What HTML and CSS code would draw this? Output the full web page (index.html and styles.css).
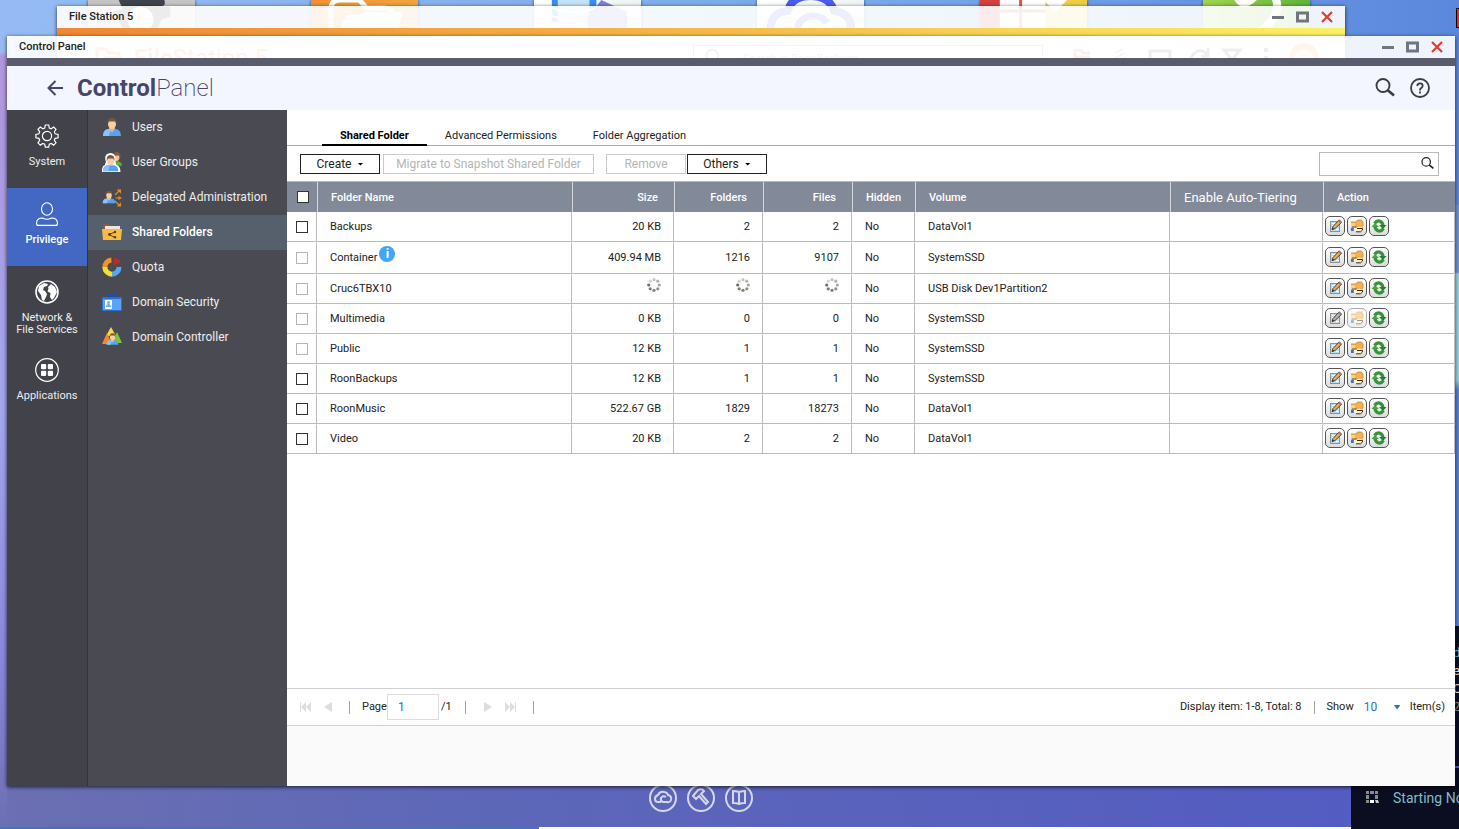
FILE: index.html
```html
<!DOCTYPE html>
<html lang="en">
<head>
  <meta charset="UTF-8" />
  <meta name="viewport" content="width=device-width, initial-scale=1.0" />
  <title>Control Panel</title>
  <link rel="stylesheet" href="styles.css">
</head>
<body>
  <svg class="sprite" aria-hidden="true">
    <symbol id="i-min" viewBox="0 0 12 12"><path d="M0 5h12v3H0z" fill="#70757f"/></symbol>
    <symbol id="i-max" viewBox="0 0 13 12"><path d="M1.5 2h10v8h-10z" fill="none" stroke="#70757f" stroke-width="3"/></symbol>
    <symbol id="i-close" viewBox="0 0 12 12"><path d="M1 1l10 10M11 1L1 11" stroke="#e03c31" stroke-width="2.200"/></symbol>
    <symbol id="i-search" viewBox="0 0 20 20"><circle cx="8" cy="7.500" r="6.500" fill="none" stroke="currentColor" stroke-width="1.900"/><path d="M12.500 12l6.500 5.500" stroke="currentColor" stroke-width="2.600"/></symbol>
    <symbol id="i-edit" viewBox="0 0 20 20">
      <rect x="5.500" y="5.500" width="9" height="10" fill="#b5e0f5" stroke="#8d9299"/>
      <path d="M7 7.500h5M7 9.500h3M11 13.500h3" stroke="#fff"/>
      <path d="M7 13.500l1-3 6-6.500 2.500 2.500-6.500 6z" fill="#f3ab45" stroke="#333" stroke-width=".9"/>
      <path d="M13 5l1.500-1.700 2.700 2.600-1.500 1.600z" fill="#9a7d78"/>
      <path d="M7 13.700l.8-2 1.400 1.300z" fill="#222"/>
    </symbol>
    <symbol id="i-perm" viewBox="0 0 20 20">
      <path d="M4 6h5l1.500-2h4L16 6v7H4z" fill="#f7b04d"/>
      <path d="M4 7h4v4H4z" fill="#ffd27a"/>
      <path d="M4 6h5l1.500-2h4L16 6v4" fill="none" stroke="#c08a3c" stroke-width=".8"/>
      <path d="M6.500 11.500H10l2-1 3.500 1v2.500l-2 1.800H9L6.500 14z" fill="#fff1c4"/>
      <path d="M10 12.500h5.500v1.500l-2 1.800H9" fill="none" stroke="#3c2d22" stroke-width="1"/>
      <path d="M5 11h4.500" stroke="#3c2d22" stroke-width=".8"/>
      <path d="M4 12h2.800v3H4z" fill="#3374d8"/>
    </symbol>
    <symbol id="i-refresh" viewBox="0 0 20 20">
      <g fill="none" stroke="#35933a" stroke-width="3.200"><path d="M5.500 7.500Q8 4 11 5.200q3 1.300 3 4.800"/><path d="M14.500 12.500Q12 16 9 14.800 6 13.500 6 10"/></g>
      <path d="M10 9h7.500L14 13z" fill="#268030"/><path d="M2.500 11H10L6 7z" fill="#49a344"/>
    </symbol>
    <symbol id="i-spin" viewBox="0 0 14 14">
      <g fill="#6c6c60">
        <circle cx="7" cy="1.700" r="1.600" opacity=".4"/><circle cx="10.800" cy="3.200" r="1.600" opacity=".5"/><circle cx="12.300" cy="7" r="1.600" opacity=".6"/><circle cx="10.800" cy="10.800" r="1.600" opacity=".75"/>
        <circle cx="7" cy="12.300" r="1.600" opacity=".85"/><circle cx="3.200" cy="10.800" r="1.600" opacity=".9"/><circle cx="1.700" cy="7" r="1.600"/><circle cx="3.200" cy="3.200" r="1.600" opacity=".3"/>
      </g>
    </symbol>
    <symbol id="i-person" viewBox="0 0 20 20">
      <path d="M1 19q0-6 5-7h8q5 1 5 7z" fill="#55a3f2"/><path d="M1 19q0-6 5-7h3l-2 7z" fill="#8ac2fa"/>
      <path d="M7 11l3 4 3-4z" fill="#fff"/><path d="M8 10h4v3l-2 2-2-2z" fill="#e5b185"/>
      <ellipse cx="10" cy="7" rx="4" ry="5" fill="#f7cfa3"/><path d="M5.500 7q-.5-6 4.500-6t4.500 6l-1.500-2.500q-4 0-6 0z" fill="#7c543a"/>
    </symbol>
  </svg>

  <div class="desktop">
    <div class="app-tiles">
      <div class="tile tile-grey"><svg viewBox="0 0 108 50"><path d="M31 0h46q2 5-2 6l8 1v10l-9 3-3 8 6 10-20 12H46L30 38l5-9q-4-8-4-9l-7-8 11-3z" fill="#3f434b"/><circle cx="53" cy="20" r="13" fill="#f0f0f0"/></svg></div>
      <div class="tile tile-orange"><svg viewBox="0 0 108 50"><path d="M20 40V10q0-10 9-10h20l7 8h18q8 0 8 8v12" fill="none" stroke="#fff" stroke-width="5"/><path d="M36 15h12l5-3h39l-8 38H20z" fill="#fff"/></svg></div>
      <div class="tile"><svg viewBox="0 0 108 50"><path d="M18 0h45v22H18z" fill="#3b8df5"/><path d="M24 0h32v22H24z" fill="#c5e2fb"/><path d="M18 8q23 8 45 0M18 16q23 8 45 0" fill="none" stroke="#fff" stroke-width="2"/><path d="M68 0l26 12v16q-20 14-40 0V18z" fill="#7c80dc"/><path d="M15 50V26q0-4 5-4h30q5 0 5 6h14v22z" fill="#dbe2ef"/></svg></div>
      <div class="tile"><svg viewBox="0 0 108 50"><path d="M14 44V26q2-14 17-15Q35-4 54-4t24 15q15 2 17 15v18" fill="none" stroke="#4b5cf0" stroke-width="8"/><path d="M40 40q-2-22 16-24 10 0 15 7" fill="none" stroke="#4b5cf0" stroke-width="7"/></svg></div>
      <div class="tile tile-split"><svg viewBox="0 0 108 50"><path d="M20-12h46v60H20z" fill="#fff"/><path d="M64 0h24L76 12z" fill="#fff"/><path d="M41-8v55M18 11h48" stroke="#e2563f" stroke-width="3"/></svg></div>
      <div class="tile tile-green"><svg viewBox="0 0 108 50"><path d="M35-2q4 7 10 4t8-7h19q10 20-15 37" fill="none" stroke="#fff" stroke-width="8"/></svg></div>
    </div>

    <section class="window file-station">
      <div class="titlebar">
        <span>File Station 5</span>
        <div class="window-controls">
          <button aria-label="Minimize"><svg width="12" height="12"><use href="#i-min"/></svg></button>
          <button aria-label="Maximize"><svg width="13" height="12"><use href="#i-max"/></svg></button>
          <button aria-label="Close"><svg width="12" height="12"><use href="#i-close"/></svg></button>
        </div>
      </div>
      <div class="fs-stripe"></div>
      <div class="fs-header">
        <svg width="28" height="24" viewBox="0 0 28 24" fill="none" stroke="#f08a30" stroke-width="3"><path d="M2 20V3h9l3 4h10v4M6 22l4-10h17"/></svg>
        <div class="fs-logo"><b>File</b>Station 5</div>
        <div class="fs-search"><svg width="18" height="18"><use href="#i-search"/></svg><span>Search in RoonBackups</span></div>
        <div class="fs-tools">
          <svg width="230" height="26" viewBox="0 0 230 26" fill="none" stroke="#555" stroke-width="3"><path d="M2 16V5h6l2 3h7M1 12h16" stroke="#e06b30"/><path d="M42 8l8-4M42 13l10-5M43 18l10-6" stroke-width="1"/><path d="M77 20V6h20v14M135 11q-5-8-12-4t-5 12M135 3v8h-7M151 5h16l-8 10z"/><path d="M193 3v4M193 11v4" stroke-width="4"/></svg>
          <i class="fs-badge"></i>
        </div>
      </div>
    </section>

    <nav class="dock">
      <a href="#" aria-label="Cloud"><svg viewBox="0 0 28 28"><circle cx="14" cy="14" r="13"/><path d="M12 18H9q-3 0-3-3t3-4q2-4 6-3 3 0 4 3 4 1 3 5-1 3-4 2h-4q-3-1-2-4 2-3 5-1"/></svg></a>
      <a href="#" aria-label="Utilities"><svg viewBox="0 0 28 28"><circle cx="14" cy="14" r="13"/><path d="M6 12l5-6q4-2 6 1l-3 3 7 8-2 2-7-8-3 3z"/></svg></a>
      <a href="#" aria-label="Help Center"><svg viewBox="0 0 28 28"><circle cx="14" cy="14" r="13"/><path d="M14 8q-3-1-6-1v12q4 0 6 1 2-1 6-1V7q-3 0-6 1zv12"/></svg></a>
    </nav>
    <div class="progress"></div>

    <aside class="notice">
      <div class="notice-text"><p class="teal">d</p><p>e</p><p>C</p><p class="dim">2</p></div>
      <div class="notice-foot">
        <svg width="13" height="13" viewBox="0 0 13 13" fill="#8b8b8b"><path d="M0 0h3v3H0zM4 0h4v3H4zM9 0h3v3H9zM0 4h3v4H0zM9 4h3v4H9zM0 9h3v3H0z"/><path d="M4 9h4v3H4z" fill="#fff"/><path d="M9 9h3l1 3H10z" fill="#ccc"/></svg>
        <span>Starting Now</span>
      </div>
    </aside>
    <div class="edge-mark"></div>

    <main class="window control-panel">
      <div class="titlebar">
        <span>Control Panel</span>
        <div class="window-controls">
          <button aria-label="Minimize"><svg width="12" height="12"><use href="#i-min"/></svg></button>
          <button aria-label="Maximize"><svg width="13" height="12"><use href="#i-max"/></svg></button>
          <button aria-label="Close"><svg width="12" height="12"><use href="#i-close"/></svg></button>
        </div>
      </div>
      <div class="cp-stripe"></div>
      <header class="cp-header">
        <button class="back" aria-label="Back"><svg width="16" height="16" viewBox="0 0 16 16" fill="none" stroke="#47456b" stroke-width="2"><path d="M16 8H2M8.500 1L1.500 8l7 7"/></svg></button>
        <h1><b>Control</b>Panel</h1>
        <div class="cp-tools">
          <button aria-label="Search"><svg width="20" height="20"><use href="#i-search"/></svg></button>
          <button aria-label="Help"><svg width="20" height="20" viewBox="0 0 20 20" fill="none" stroke="currentColor" stroke-width="1.800"><circle cx="10" cy="10" r="9"/><path d="M7.300 8q0-2.700 2.700-2.700T12.700 7.800q0 1.200-1.400 2.200T10 12v.5M10 13.600v1.900"/></svg></button>
        </div>
      </header>

      <div class="cp-body">
        <nav class="rail">
          <a href="#"><svg width="24" height="24" viewBox="0 0 24 24" fill="none" stroke="#fff" stroke-width="1.200"><circle cx="12" cy="12" r="4.600"/><path d="M10.300 1h3.400l.6 3 1.900.8 2.500-1.700 2.300 2.300-1.700 2.500.8 1.900 3 .6v3.400l-3 .6-.8 1.900 1.700 2.500-2.300 2.300-2.500-1.700-1.900.8-.6 3h-3.400l-.6-3-1.900-.8-2.500 1.700L3 18.800l1.700-2.500-.8-1.900-3-.6v-3.400l3-.6.8-1.900L3 5.400l2.300-2.300 2.500 1.700 1.900-.8z"/></svg><span>System</span></a>
          <a href="#" class="active"><svg width="24" height="24" viewBox="0 0 24 24" fill="none" stroke="#fff" stroke-width="1.100"><ellipse cx="12" cy="7" rx="5.500" ry="6.300"/><path d="M3.500 23.400h17q2 0 2-2 0-5.400-6-5.400-4.500 2.500-9 0-6 0-6 5.400 0 2 2 2z"/></svg><span>Privilege</span></a>
          <a href="#"><svg width="24" height="24" viewBox="0 0 24 24"><circle cx="12" cy="12" r="11" fill="none" stroke="#fff" stroke-width="1.600"/><path d="M4 6l5-3 4 1-1 2-3 1-1 3 2 1 2 3-1 3-2 4-2-1-1-5-3-4zM13 7l3-3 4 3 2 5-3 6-2 2-2-3 .5-4-3-1.500 1-3z" fill="#fff"/></svg><span>Network &amp;<br>File Services</span></a>
          <a href="#"><svg width="24" height="24" viewBox="0 0 24 24"><circle cx="12" cy="12" r="11.300" fill="none" stroke="#fff" stroke-width="1.200"/><g fill="#fff"><rect x="6" y="6" width="5.200" height="5.200" rx="1"/><rect x="12.800" y="6" width="5.200" height="5.200" rx="1"/><rect x="6" y="12.800" width="5.200" height="5.200" rx="1"/><rect x="12.800" y="12.800" width="5.200" height="5.200" rx="1"/></g></svg><span>Applications</span></a>
        </nav>

        <nav class="submenu">
          <a href="#"><svg width="20" height="20"><use href="#i-person"/></svg>Users</a>
          <a href="#"><svg width="20" height="20" viewBox="0 0 20 20"><path d="M10 13q1-4 4-4 6 0 6 5z" fill="#5fae2f"/><ellipse cx="14.500" cy="5" rx="3" ry="4" fill="#f2c398"/><path d="M11 4q0-4 4-4t3.500 6l-2-2.500z" fill="#8a5a3c"/><path d="M0 20q-.5-6 3-7 0-2 1-3-3-8 4.500-9 6 0 5 9l1 3q4 1 4 7z" fill="#fff"/><g transform="translate(0 3) scale(.86)"><path d="M1 19q0-6 5-7h8q5 1 5 7z" fill="#55a3f2"/><path d="M1 19q0-6 5-7h3l-2 7z" fill="#8ac2fa"/><ellipse cx="10" cy="7" rx="4" ry="5" fill="#f7cfa3"/><path d="M5.500 7Q5 0 10 0t4.500 7L13 4H7z" fill="#7c543a"/></g></svg>User Groups</a>
          <a href="#"><svg width="20" height="20" viewBox="0 0 20 20"><svg x="0" y="3" width="14" height="14" viewBox="0 0 20 20"><use href="#i-person"/></svg><g stroke="#e8892b" stroke-width="1.100" fill="#e8892b"><path d="M13 8l4-4M13.500 11h4M13 14l4 4" fill="none"/><path d="M16 3h2.500v2.500zM17 10l2 1-2 1zM18.500 16.500V19H16z"/></g></svg>Delegated Administration</a>
          <a href="#" class="active"><svg width="20" height="20" viewBox="0 0 20 20"><path d="M1 2h6l2 2h9v5H1z" fill="#8a5a43"/><path d="M3 4h15v4H3z" fill="#f3e6d6"/><path d="M0 7h20l-1 11H1z" fill="#f5bd41"/><path d="M13 10l-6 2.500 6 3" stroke="#5d3b1c" stroke-width="1" fill="none"/><g fill="#5d3b1c"><circle cx="13" cy="10" r="1.200"/><circle cx="7.500" cy="12.500" r="1.400"/><circle cx="13" cy="15.300" r="1.200"/></g></svg>Shared Folders</a>
          <a href="#"><svg width="20" height="20" viewBox="0 0 20 20" fill="none" stroke-width="5"><path d="M2.900 10.500a7 7 0 0 1 6.500-7.500" stroke="#f39326"/><path d="M2.900 10a7 7 0 0 0 7.100 7.200" stroke="#fbdc35"/><path d="M10 17.200A7 7 0 0 0 17 10" stroke="#55a8ec"/><path d="M12 8V1q5 0 7 4.500z" fill="#b52f2a"/></svg>Quota</a>
          <a href="#"><svg width="20" height="20" viewBox="0 0 20 20"><path d="M5 0l5 3 5-3-1 6H6z" fill="#1f4fa8"/><path d="M0 5h20v14H0z" fill="#2b6fd0"/><path d="M1 7h18v11H1z" fill="#5aa4f5"/><path d="M3 8h7v9H3z" fill="#fff"/><path d="M4 15q0-3 2.500-3T9 15z" fill="#6aaef5"/><circle cx="6.500" cy="10.500" r="1.500" fill="#6aaef5"/></svg>Domain Security</a>
          <a href="#"><svg width="20" height="20" viewBox="0 0 20 20"><path d="M9 0l5 9H4z" fill="#f8df35"/><path d="M5 6l5 11H0z" fill="#f08a2c"/><path d="M15 5l5 11H10z" fill="#7bc832"/><svg x="4" y="5" width="13" height="14" viewBox="0 0 20 20"><use href="#i-person"/></svg></svg>Domain Controller</a>
        </nav>

        <section class="content">
          <div class="tabs" role="tablist">
            <button role="tab" aria-selected="true" class="active">Shared Folder</button>
            <button role="tab" aria-selected="false">Advanced Permissions</button>
            <button role="tab" aria-selected="false">Folder Aggregation</button>
          </div>
          <div class="toolbar">
            <button class="menu">Create</button>
            <button class="wide" disabled>Migrate to Snapshot Shared Folder</button>
            <button class="apart" disabled>Remove</button>
            <button class="menu others">Others</button>
            <div class="search">
              <input type="text" aria-label="Search folders">
              <button aria-label="Search"><svg width="13" height="13"><use href="#i-search"/></svg></button>
            </div>
          </div>

          <table>
            <colgroup><col class="c-check"><col><col class="c-size"><col class="c-num"><col class="c-num"><col class="c-hidden"><col><col class="c-tier"><col class="c-action"></colgroup>
            <thead>
              <tr><th class="check"><input type="checkbox" aria-label="Select all"></th><th>Folder Name</th><th class="num">Size</th><th class="num">Folders</th><th class="num">Files</th><th>Hidden</th><th>Volume</th><th class="tier">Enable Auto-Tiering</th><th>Action</th></tr>
            </thead>
            <tbody>
              <tr>
                <td class="check"><input type="checkbox" aria-label="Backups"></td><td>Backups</td><td class="num">20 KB</td><td class="num">2</td><td class="num">2</td><td>No</td><td>DataVol1</td><td></td>
                <td class="action"><div><button aria-label="Edit"><svg><use href="#i-edit"/></svg></button><button aria-label="Permissions"><svg><use href="#i-perm"/></svg></button><button aria-label="Refresh"><svg><use href="#i-refresh"/></svg></button></div></td>
              </tr>
              <tr class="tall">
                <td class="check"><input type="checkbox" aria-label="Container" disabled></td><td><div class="with-info">Container<span class="info">i</span></div></td><td class="num">409.94 MB</td><td class="num">1216</td><td class="num">9107</td><td>No</td><td>SystemSSD</td><td></td>
                <td class="action"><div><button aria-label="Edit"><svg><use href="#i-edit"/></svg></button><button aria-label="Permissions"><svg><use href="#i-perm"/></svg></button><button aria-label="Refresh"><svg><use href="#i-refresh"/></svg></button></div></td>
              </tr>
              <tr>
                <td class="check"><input type="checkbox" aria-label="Cruc6TBX10" disabled></td><td>Cruc6TBX10</td><td class="num"><svg class="spin"><use href="#i-spin"/></svg></td><td class="num"><svg class="spin"><use href="#i-spin"/></svg></td><td class="num"><svg class="spin"><use href="#i-spin"/></svg></td><td>No</td><td>USB Disk Dev1Partition2</td><td></td>
                <td class="action"><div><button aria-label="Edit"><svg><use href="#i-edit"/></svg></button><button aria-label="Permissions"><svg><use href="#i-perm"/></svg></button><button aria-label="Refresh"><svg><use href="#i-refresh"/></svg></button></div></td>
              </tr>
              <tr>
                <td class="check"><input type="checkbox" aria-label="Multimedia" disabled></td><td>Multimedia</td><td class="num">0 KB</td><td class="num">0</td><td class="num">0</td><td>No</td><td>SystemSSD</td><td></td>
                <td class="action"><div><button aria-label="Edit" class="grey"><svg><use href="#i-edit"/></svg></button><button aria-label="Permissions" disabled><svg><use href="#i-perm"/></svg></button><button aria-label="Refresh"><svg><use href="#i-refresh"/></svg></button></div></td>
              </tr>
              <tr>
                <td class="check"><input type="checkbox" aria-label="Public" disabled></td><td>Public</td><td class="num">12 KB</td><td class="num">1</td><td class="num">1</td><td>No</td><td>SystemSSD</td><td></td>
                <td class="action"><div><button aria-label="Edit"><svg><use href="#i-edit"/></svg></button><button aria-label="Permissions"><svg><use href="#i-perm"/></svg></button><button aria-label="Refresh"><svg><use href="#i-refresh"/></svg></button></div></td>
              </tr>
              <tr>
                <td class="check"><input type="checkbox" aria-label="RoonBackups"></td><td>RoonBackups</td><td class="num">12 KB</td><td class="num">1</td><td class="num">1</td><td>No</td><td>SystemSSD</td><td></td>
                <td class="action"><div><button aria-label="Edit"><svg><use href="#i-edit"/></svg></button><button aria-label="Permissions"><svg><use href="#i-perm"/></svg></button><button aria-label="Refresh"><svg><use href="#i-refresh"/></svg></button></div></td>
              </tr>
              <tr>
                <td class="check"><input type="checkbox" aria-label="RoonMusic"></td><td>RoonMusic</td><td class="num">522.67 GB</td><td class="num">1829</td><td class="num">18273</td><td>No</td><td>DataVol1</td><td></td>
                <td class="action"><div><button aria-label="Edit"><svg><use href="#i-edit"/></svg></button><button aria-label="Permissions"><svg><use href="#i-perm"/></svg></button><button aria-label="Refresh"><svg><use href="#i-refresh"/></svg></button></div></td>
              </tr>
              <tr>
                <td class="check"><input type="checkbox" aria-label="Video"></td><td>Video</td><td class="num">20 KB</td><td class="num">2</td><td class="num">2</td><td>No</td><td>DataVol1</td><td></td>
                <td class="action"><div><button aria-label="Edit"><svg><use href="#i-edit"/></svg></button><button aria-label="Permissions"><svg><use href="#i-perm"/></svg></button><button aria-label="Refresh"><svg><use href="#i-refresh"/></svg></button></div></td>
              </tr>
            </tbody>
          </table>

          <div class="pager">
            <button aria-label="First page" disabled><svg width="12" height="10" viewBox="0 0 12 10"><path d="M0 0h1v10H0zM6 0v10L1 5zM11 0v10L6 5z"/></svg></button>
            <button aria-label="Previous page" disabled><svg width="8" height="10" viewBox="0 0 8 10"><path d="M8 0v10L0 5z"/></svg></button>
            <i class="sep"></i>
            <label for="page">Page</label><input id="page" type="text" value="1"><span class="total">/1</span>
            <i class="sep"></i>
            <button class="next" aria-label="Next page" disabled><svg width="8" height="10" viewBox="0 0 8 10"><path d="M0 0v10l8-5z"/></svg></button>
            <button aria-label="Last page" disabled><svg width="12" height="10" viewBox="0 0 12 10"><path d="M11 0h1v10h-1zM6 0v10l5-5zM1 0v10l5-5z"/></svg></button>
            <i class="sep"></i>
            <div class="summary">
              <span>Display item: 1-8, Total: 8</span>
              <i class="sep"></i>
              <label for="show">Show</label>
              <div class="select"><select id="show"><option>10</option><option>20</option><option>50</option></select></div>
              <span>Item(s)</span>
            </div>
          </div>
          <div class="content-foot"></div>
        </section>
      </div>
    </main>
  </div>
</body>
</html>
```
FILE: styles.css
```css
* {
  box-sizing: border-box;
}

body {
  margin: 0;
  font-family: Roboto, "Liberation Sans", sans-serif;
  font-size: 11px;
  color: #222;
}

button {
  padding: 0;
  border: 0;
  background: none;
  font: inherit;
  color: inherit;
}

svg {
  display: block;
}

a {
  color: inherit;
  text-decoration: none;
}

.sprite {
  position: absolute;
  width: 0;
  height: 0;
}

/* desktop */
.desktop {
  position: relative;
  height: 100vh;
  overflow: hidden;
  background:
    linear-gradient(#5e87dc 0 205px, #7292da 205px 272px, #96d4dc 274px 380px, #5b80d6 390px) right / 4px 100% no-repeat,
    linear-gradient(transparent 52px, #b096dc 56px, #a3a7ee 50%, #8a86dc 80%, #6c6fb2) left / 7px 100% no-repeat,
    linear-gradient(90deg, #6c6fb2, #5e68b8 30%, #525bc2) bottom / 100% 50% no-repeat,
    linear-gradient(90deg, #96bbf4, #7aa7ec 60%, #5b88dc);
}

.app-tiles {
  display: flex;
  justify-content: space-between;
  padding: 0 149px 0 88px;
}

.tile {
  width: 107px;
  height: 50px;
  overflow: hidden;
  background: linear-gradient(90deg, #fff, #eef4f6);
  box-shadow: 0 0 3px rgba(0, 0, 0, 0.6);
}

.tile-grey { background: #c5c5c5; }
.tile-orange { background: linear-gradient(90deg, #f09133, #f3a641); }
.tile-split { background: linear-gradient(90deg, #d4403d 55%, #eccf45 55%); }
.tile-green { background: linear-gradient(90deg, #a0d34d, #5fb43a); }

/* windows */
.window {
  position: absolute;
  display: flex;
  flex-direction: column;
  box-shadow: 0 1px 4px rgba(0, 0, 0, 0.75);
}

.file-station {
  top: 6px;
  left: 57px;
  right: 114px;
}

.control-panel {
  top: 36px;
  left: 7px;
  right: 4px;
  bottom: 43px;
}

.titlebar {
  display: flex;
  align-items: center;
  justify-content: space-between;
  height: 22px;
  padding: 0 12px;
  background: rgba(255, 255, 255, 0.9);
  font-weight: 500;
  color: #222;
}

.titlebar span {
  padding-bottom: 2px;
}

.window-controls {
  display: flex;
  align-items: center;
  gap: 12px;
}

.fs-stripe {
  height: 8px;
  background: linear-gradient(90deg, #f08832, #f5b345 45%, #fdf062);
}

.fs-header {
  display: flex;
  align-items: center;
  height: 44px;
  padding: 0 26px 0 38px;
  background: #fff;
}

.fs-logo {
  padding-left: 11px;
  font-size: 24px;
  color: #f08a30;
}

.fs-search {
  display: flex;
  align-items: center;
  gap: 20px;
  width: 350px;
  height: 26px;
  margin-left: auto;
  padding-left: 11px;
  border: 1px solid #999;
  color: #777;
}

.fs-tools {
  display: flex;
  align-items: center;
  padding-left: 30px;
}

.fs-badge {
  width: 30px;
  height: 30px;
  margin-left: -14px;
  border: 6px solid #f5a34a;
  border-radius: 15px;
  background: #fbd3a5;
}

.cp-stripe {
  height: 8px;
  background: #5a5c6e;
}

.cp-header {
  display: flex;
  align-items: center;
  height: 44px;
  padding: 0 25px 0 40px;
  background: #f3f6ff;
  color: #47456b;
}

.cp-header h1 {
  margin: 0 0 0 14px;
  font-size: 24px;
  font-weight: 200;
}

.cp-header h1 b {
  font-weight: 700;
}

.cp-tools {
  display: flex;
  gap: 15px;
  margin-left: auto;
  color: #3a3b44;
}

.cp-body {
  display: flex;
  flex: 1;
  min-height: 0;
}

/* left navigation */
.rail {
  flex: none;
  width: 81px;
  border-right: 1px solid #333438;
  background: #41424a;
  color: #eee;
}

.rail a {
  display: flex;
  flex-direction: column;
  align-items: center;
  gap: 8px;
  height: 78px;
  padding-top: 14px;
  line-height: 12px;
  text-align: center;
}

.rail a.active {
  background: #4268c4;
  color: #fff;
  font-weight: 500;
}

.submenu {
  flex: none;
  width: 199px;
  background: #4a4b52;
  font-size: 12px;
  color: #eee;
}

.submenu a {
  display: flex;
  align-items: center;
  gap: 10px;
  height: 35px;
  padding: 0 0 2px 14px;
}

.submenu a.active {
  background: #565f6c;
  color: #fff;
  font-weight: 500;
}

/* content */
.content {
  display: flex;
  flex-direction: column;
  flex: 1;
  min-width: 0;
  background: #fff;
}

.tabs {
  display: flex;
  align-items: flex-end;
  height: 36px;
  padding-left: 35px;
  border-bottom: 1px solid #aaa;
}

.tabs button {
  height: 20px;
  margin-bottom: -1px;
  padding: 0 18px;
  border-bottom: 2px solid transparent;
}

.tabs .active {
  border-color: #000;
  font-weight: 700;
  color: #000;
}

.toolbar {
  display: flex;
  align-items: center;
  height: 35px;
  padding: 0 16px 0 13px;
}

.toolbar > button {
  width: 80px;
  height: 20px;
  border: 1px solid #222;
  font-size: 12px;
}

.toolbar > button:disabled {
  border-color: #ccc;
  color: #b5b5b5;
}

.toolbar .menu::after {
  content: "";
  display: inline-block;
  width: 6px;
  height: 3px;
  margin-left: 6px;
  vertical-align: 2px;
  background: #000;
  clip-path: polygon(0 0, 100% 0, 50% 100%);
}

.toolbar .wide {
  width: 211px;
  margin-left: 3px;
}

.toolbar .apart {
  margin-left: 12px;
}

.toolbar .others {
  margin-left: 1px;
}

.search {
  display: flex;
  align-items: center;
  width: 120px;
  height: 24px;
  margin-left: auto;
  padding-right: 4px;
  border: 1px solid #bbb;
}

.search input {
  flex: 1;
  min-width: 0;
  height: 20px;
  border: 0;
  outline: 0;
  font: inherit;
}

table {
  width: 100%;
  table-layout: fixed;
  border-spacing: 0;
  border-top: 1px solid #bbb;
}

.c-check { width: 30px; }
.c-size { width: 102px; }
.c-num { width: 89px; }
.c-hidden { width: 63px; }
.c-tier { width: 153px; }
.c-action { width: 132px; }

th {
  height: 30px;
  padding: 0 13px;
  border-left: 1px solid #d5d7dc;
  background: #828998;
  font-weight: 500;
  text-align: left;
  color: #fff;
  white-space: nowrap;
}

th.num {
  padding-right: 16px;
}

th.tier {
  font-size: 13px;
  font-weight: 400;
}

td {
  height: 30px;
  padding: 0 12px 2px 13px;
  border: solid #bbb;
  border-width: 1px 1px 1px 0;
  border-top-color: #fff;
}

.tall td {
  height: 32px;
}

.num {
  text-align: right;
}

th.check,
td.check {
  padding: 0;
  text-align: center;
}

th.check {
  padding-left: 2px;
  border-left: 0;
}

.check input {
  appearance: none;
  display: block;
  width: 12px;
  height: 12px;
  margin: 0 auto;
  border: 1px solid #333;
  background: #fff;
}

.check input:disabled {
  border-color: #b5b5b5;
}

.with-info {
  display: flex;
  align-items: center;
  gap: 2px;
}

.info {
  width: 16px;
  height: 16px;
  margin-bottom: 6px;
  border-radius: 8px;
  background: #42a5f5;
  font-size: 13px;
  font-weight: 700;
  line-height: 16px;
  text-align: center;
  color: #fff;
}

.spin {
  width: 14px;
  height: 14px;
  margin: 0 0 6px auto;
}

td.action {
  padding: 0 2px 2px;
}

.action div {
  display: flex;
  gap: 2px;
}

.action button {
  width: 20px;
  height: 20px;
  border: 1px solid #555;
  border-radius: 5px;
  background: linear-gradient(#fff, #dcdcdc);
}

.action svg {
  width: 20px;
  height: 20px;
  margin: -1px;
}

.action .grey svg {
  filter: grayscale(1);
}

.action button:disabled {
  opacity: 0.5;
}

/* pager */
.pager {
  display: flex;
  align-items: center;
  height: 38px;
  margin-top: auto;
  padding: 0 10px 0 13px;
  border: solid #d0d0d0;
  border-width: 1px 0;
}

.pager label,
.pager span {
  padding-bottom: 2px;
}

.pager button {
  margin-right: 12px;
  fill: #ddd;
}

.pager .next {
  margin-left: 6px;
}

.pager .sep {
  width: 1px;
  height: 13px;
  margin: 0 12px 0 5px;
  background: #a5a296;
}

.pager input {
  width: 52px;
  height: 26px;
  padding: 0 10px;
  border: 1px solid #ddd;
  font: inherit;
  font-size: 12px;
  color: #2a6fc9;
}

.pager .total {
  padding: 0 8px 2px 2px;
}

.summary {
  display: flex;
  align-items: center;
  margin-left: auto;
}

.pager .summary .sep {
  margin: 0 12px;
}

.select {
  display: flex;
  align-items: center;
  padding: 0 9px 0 10px;
}

.select select {
  appearance: none;
  width: 30px;
  padding: 0;
  border: 0;
  background: none;
  font: inherit;
  font-size: 12px;
  color: #2a6fc9;
}

.select::after {
  content: "";
  width: 7px;
  height: 5px;
  background: #2a6fc9;
  clip-path: polygon(0 0, 100% 0, 50% 100%);
}

.content-foot {
  height: 60px;
  background: #fafafa;
}

/* dock and notifications */
.dock {
  position: absolute;
  left: 0;
  right: 57px;
  bottom: 17px;
  display: flex;
  justify-content: center;
  gap: 10px;
}

.dock svg {
  width: 28px;
  height: 28px;
  fill: none;
  stroke: #d5d6e6;
  stroke-width: 2;
}

.progress {
  position: absolute;
  left: 0;
  right: 0;
  bottom: 0;
  height: 2px;
  background: linear-gradient(90deg, #3f7ab5 539px, #fff 539px);
}

.notice {
  position: absolute;
  top: 626px;
  right: 0;
  bottom: 0;
  display: flex;
  flex-direction: column;
  justify-content: space-between;
  width: 108px;
  background: #0b0d20;
  color: #eee;
}

.notice-text {
  height: 142px;
  padding: 18px 0 0 102px;
  border-bottom: 2px solid #5560b8;
  font-size: 13px;
  line-height: 18px;
}

.notice-text p {
  margin: 0;
}

.notice-text .dim {
  color: #888;
}

.notice-text .teal,
.notice-foot {
  color: #80bac8;
}

.notice-foot {
  display: flex;
  align-items: center;
  gap: 14px;
  height: 61px;
  padding: 0 0 2px 15px;
  overflow: hidden;
  font-size: 14px;
  white-space: nowrap;
}

.notice-foot svg {
  flex: none;
}

.edge-mark {
  position: absolute;
  top: 8px;
  right: 0;
  width: 3px;
  height: 20px;
  border: solid #000;
  border-width: 1px 0 1px 1px;
  background: #ee2a12;
}
```
